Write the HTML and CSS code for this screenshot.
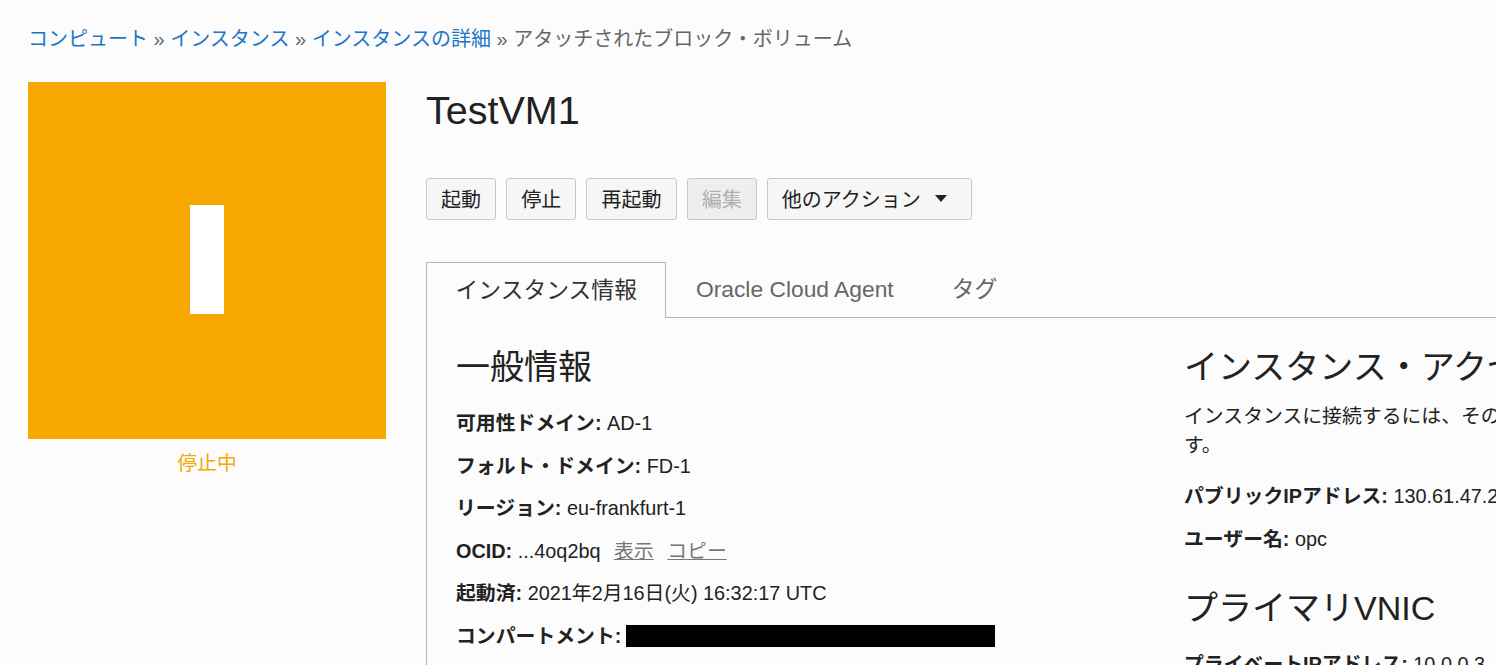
FILE: index.html
```html
<!DOCTYPE html>
<html lang="ja">
<head>
    <meta charset="UTF-8">
    <title>TestVM1</title>
    <link rel="stylesheet" href="styles.css">
</head>
<body>
    <nav class="breadcrumb">
        <a href="#">コンピュート</a> » <a href="#">インスタンス</a> » <a href="#">インスタンスの詳細</a> » アタッチされたブロック・ボリューム
    </nav>
    <div class="page">
        <aside class="sidebar">
            <div class="badge"><span class="badge-letter"></span></div>
            <div class="status">停止中</div>
        </aside>
        <main class="content">
            <h1 class="title">TestVM1</h1>
            <div class="actions">
                <button class="btn">起動</button>
                <button class="btn">停止</button>
                <button class="btn">再起動</button>
                <button class="btn btn-disabled">編集</button>
                <button class="btn btn-menu">他のアクション <span class="caret"></span></button>
            </div>
            <div class="tabs">
                <div class="tab tab-active">インスタンス情報</div>
                <div class="tab">Oracle Cloud Agent</div>
                <div class="tab">タグ</div>
                <div class="tab-rest"></div>
            </div>
            <div class="panel">
                <section class="col-left">
                    <h2 class="heading">一般情報</h2>
                    <p class="field"><b>可用性ドメイン:</b> AD-1</p>
                    <p class="field"><b>フォルト・ドメイン:</b> FD-1</p>
                    <p class="field"><b>リージョン:</b> eu-frankfurt-1</p>
                    <p class="field"><b>OCID:</b> ...4oq2bq <a class="link" href="#">表示</a> <a class="link" href="#">コピー</a></p>
                    <p class="field"><b>起動済:</b> 2021年2月16日(火) 16:32:17 UTC</p>
                    <p class="field"><b>コンパートメント:</b> <span class="redacted"></span></p>
                </section>
                <section class="col-right">
                    <h2 class="heading">インスタンス・アクセス</h2>
                    <p class="note">インスタンスに接続するには、そのパブリックIPアドレスとユーザー名が必要で<br>す。</p>
                    <p class="field"><b>パブリックIPアドレス:</b> 130.61.47.224</p>
                    <p class="field"><b>ユーザー名:</b> opc</p>
                    <h2 class="heading heading-next">プライマリVNIC</h2>
                    <p class="field"><b>プライベートIPアドレス:</b> 10.0.0.3</p>
                </section>
            </div>
        </main>
    </div>
</body>
</html>
```

FILE: styles.css
```css
html, body {
    height: 665px;
    overflow: hidden;
}
body {
    margin: 0;
    padding: 0 28px;
    width: 1900px;
    background-color: #fcfcfc;
    color: #222;
    font-family: "Liberation Sans", "Noto Sans CJK JP", sans-serif;
    font-size: 19.85px;
}
a {
    color: #1a76c9;
    text-decoration: none;
}
.breadcrumb {
    padding-top: 26px;
    height: 82px;
    box-sizing: border-box;
    line-height: 27px;
    font-size: 20px;
    color: #666;
}
.page {
    display: flex;
    gap: 40px;
}
.sidebar {
    width: 358px;
    flex: none;
}
.badge {
    height: 357px;
    background-color: #f7a800;
    display: flex;
    align-items: center;
    justify-content: center;
}
.badge-letter {
    width: 34px;
    height: 109px;
    margin-bottom: 2px;
    background-color: #fff;
}
.status {
    margin-top: 11px;
    text-align: center;
    line-height: 27px;
    font-size: 19.85px;
    color: #f7a800;
}
.content {
    flex: 1;
}
.title {
    margin: 0;
    padding-top: 3px;
    font-size: 39.5px;
    line-height: 50px;
    font-weight: 400;
}
.actions {
    display: flex;
    gap: 10px;
    margin-top: 43px;
}
.btn {
    height: 42px;
    padding: 0 14.1px 2px;
    border: 1px solid #c6c8cc;
    border-radius: 3px;
    background-color: #f6f6f6;
    color: #222;
    font: inherit;
    font-size: 20px;
}
.btn-disabled {
    background-color: #eeeeee;
    color: #b0b0b0;
}
.btn-menu {
    display: flex;
    align-items: center;
    gap: 14px;
}
.caret {
    width: 0;
    height: 0;
    margin-right: 10px;
    border-left: 6.5px solid transparent;
    border-right: 6.5px solid transparent;
    border-top: 7px solid #222;
}
.tabs {
    display: flex;
    margin-top: 42px;
    height: 56px;
}
.tab {
    padding: 0 28.5px;
    line-height: 54px;
    font-size: 22.8px;
    color: #666;
    border-bottom: 1px solid #b5b5b5;
}
.tab + .tab {
    padding: 0 28.5px 0 29.5px;
}
.tab-active {
    color: #333;
    border: 1px solid #b5b5b5;
    border-bottom: none;
}
.tab-rest {
    flex: 1;
    border-bottom: 1px solid #b5b5b5;
}
.panel {
    display: flex;
    height: 400px;
    padding: 0 29px;
    border-left: 1px solid #b5b5b5;
}
.col-left {
    width: 728px;
    flex: none;
}
.col-right {
    flex: 1;
}
.heading {
    margin: 0;
    padding-top: 26px;
    font-size: 34px;
    line-height: 46px;
    font-weight: 400;
}
.heading-next {
    padding-top: 25px;
}
.field {
    margin: 0;
    height: 42.6px;
    line-height: 42.6px;
    white-space: nowrap;
}
.heading + .field {
    margin-top: 12px;
}
.note {
    margin: 12px 0 0;
    line-height: 29px;
    white-space: nowrap;
}
.note + .field {
    margin-top: 15px;
}
.link {
    margin-left: 8px;
    color: #777;
    text-decoration: underline;
}
.redacted {
    display: inline-block;
    width: 369px;
    height: 22px;
    margin-left: -1px;
    vertical-align: -4px;
    background-color: #000;
}
```
